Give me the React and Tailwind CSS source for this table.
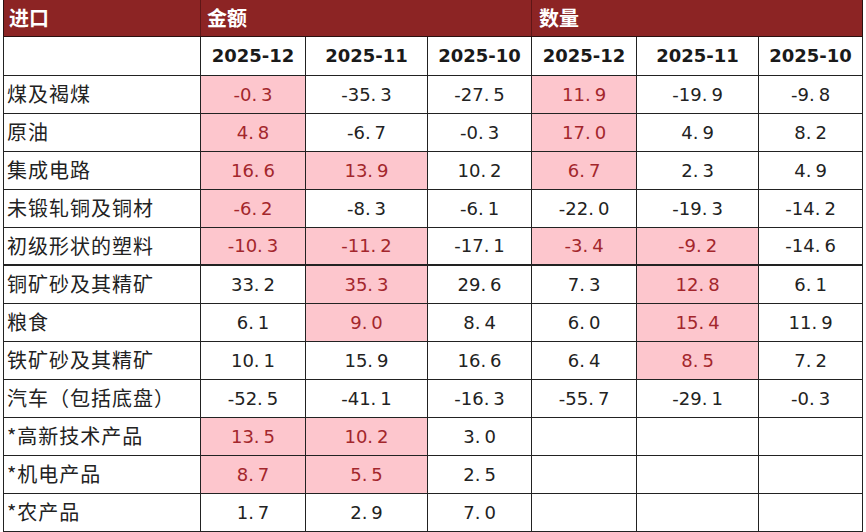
import React from "react";

const P = (v) => ({ v, p: true });
const rows = [
  ["煤及褐煤", P("-0.3"), "-35.3", "-27.5", P("11.9"), "-19.9", "-9.8"],
  ["原油", P("4.8"), "-6.7", "-0.3", P("17.0"), "4.9", "8.2"],
  ["集成电路", P("16.6"), P("13.9"), "10.2", P("6.7"), "2.3", "4.9"],
  ["未锻轧铜及铜材", P("-6.2"), "-8.3", "-6.1", "-22.0", "-19.3", "-14.2"],
  ["初级形状的塑料", P("-10.3"), P("-11.2"), "-17.1", P("-3.4"), P("-9.2"), "-14.6"],
  ["铜矿砂及其精矿", "33.2", P("35.3"), "29.6", "7.3", P("12.8"), "6.1"],
  ["粮食", "6.1", P("9.0"), "8.4", "6.0", P("15.4"), "11.9"],
  ["铁矿砂及其精矿", "10.1", "15.9", "16.6", "6.4", P("8.5"), "7.2"],
  ["汽车（包括底盘）", "-52.5", "-41.1", "-16.3", "-55.7", "-29.1", "-0.3"],
  ["*高新技术产品", P("13.5"), P("10.2"), "3.0", "", "", ""],
  ["*机电产品", P("8.7"), P("5.5"), "2.5", "", "", ""],
  ["*农产品", "1.7", "2.9", "7.0", "", "", ""],
];

function Num({ v }) {
  if (!v) return null;
  const [a, b] = v.split(".");
  return (
    <span>
      {a}
      <span className="mr-[4px]">.</span>
      {b}
    </span>
  );
}

export default function App() {
  const cjk = { fontFamily: '"Noto Sans CJK SC", "Noto Sans", sans-serif' };
  const num = { fontFamily: '"DejaVu Sans", "Liberation Sans", sans-serif' };
  return (
    <div className="w-[866px] h-[532px] bg-white pl-[3px] overflow-hidden">
      <table className="border-collapse table-fixed w-[860px]">
        <colgroup>
          <col className="w-[197px]" />
          <col className="w-[105px]" />
          <col className="w-[122px]" />
          <col className="w-[104px]" />
          <col className="w-[105px]" />
          <col className="w-[122px]" />
          <col className="w-[104px]" />
        </colgroup>
        <thead>
          <tr className="h-[36px] bg-[#8c2424] text-white">
            <th
              className="border border-[#2a1010] border-t-0 border-r-[#5e1616] text-left pl-[5px] text-[20px] font-bold"
              style={cjk}
            >
              进口
            </th>
            <th
              colSpan={3}
              className="border border-[#2a1010] border-t-0 border-x-[#5e1616] text-left pl-[6px] text-[20px] font-bold"
              style={cjk}
            >
              金额
            </th>
            <th
              colSpan={3}
              className="border border-[#2a1010] border-t-0 border-l-[#5e1616] text-left pl-[7px] text-[20px] font-bold"
              style={cjk}
            >
              数量
            </th>
          </tr>
          <tr className="h-[39px] bg-white text-[#1a1a1a]">
            <th className="border border-[#222]"></th>
            {["2025-12", "2025-11", "2025-10", "2025-12", "2025-11", "2025-10"].map((d, i) => (
              <th key={i} className="border border-[#222] text-center text-[18px] font-bold" style={num}>
                {d}
              </th>
            ))}
          </tr>
        </thead>
        <tbody>
          {rows.map((r, ri) => (
            <tr key={ri} className="h-[38px]">
              <td
                className={`border border-[#222] text-left pl-[3px] text-[20px] tracking-[1px] text-[#222] ${
                  ri === 4 ? "border-b-2" : ""
                }`}
                style={cjk}
              >
                {r[0]}
              </td>
              {r.slice(1).map((c, ci) => {
                const pink = typeof c === "object";
                const v = pink ? c.v : c;
                return (
                  <td
                    key={ci}
                    className={`border border-[#222] text-center text-[18px] ${
                      pink ? "bg-[#fdc6cd] text-[#a3262c]" : "text-[#222]"
                    } ${ri === 4 ? "border-b-2" : ""}`}
                    style={num}
                  >
                    <Num v={v} />
                  </td>
                );
              })}
            </tr>
          ))}
        </tbody>
      </table>
    </div>
  );
}
